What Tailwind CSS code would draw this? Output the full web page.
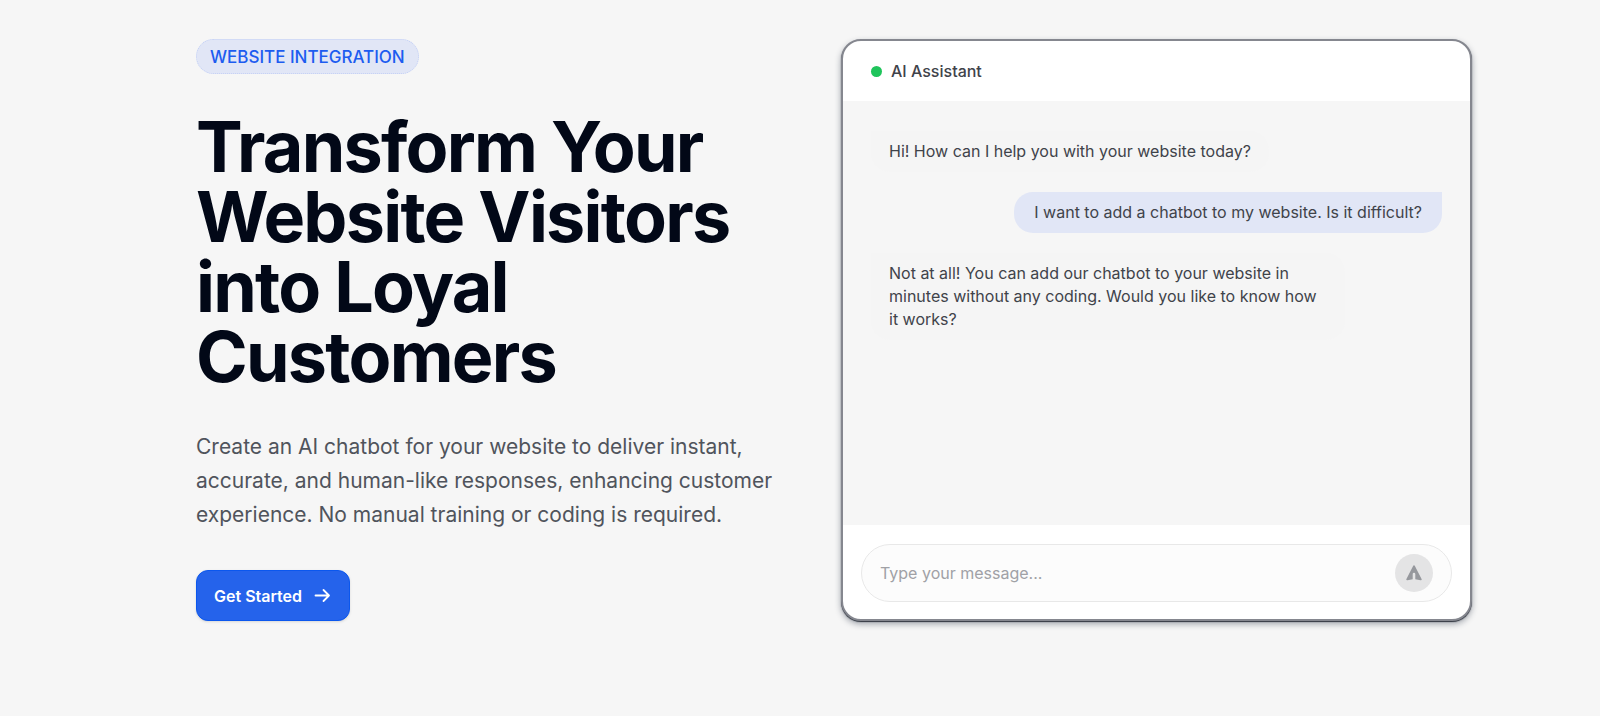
<!DOCTYPE html>
<html lang="en">
<head>
    <meta charset="UTF-8">
    <meta name="viewport" content="width=device-width, initial-scale=1.0">
    <title>Website Integration</title>
    <script src="https://cdn.jsdelivr.net/npm/@tailwindcss/browser@4"></script>
</head>
<body class="bg-[#f6f6f6] font-['Inter',sans-serif] text-[#3f434a]">
    <main class="mx-auto grid max-w-[1344px] grid-cols-2 gap-[14px] pt-[39px] pb-24 pl-[68px]">
        <!-- Hero -->
        <section class="flex flex-col items-start">
            <span class="rounded-full border border-dotted border-[#c3d0f5] bg-[#e1e6f6] px-[13px] pt-[6px] pb-1 text-[17px] leading-[23px] font-medium text-[#1d5cf0]">WEBSITE INTEGRATION</span>
            <h1 class="mt-[38px] max-w-[600px] text-[70px] leading-[70px] font-bold tracking-tight text-[#020817]">Transform Your Website Visitors into Loyal Customers</h1>
            <p class="mt-[38px] max-w-[600px] text-[21px] leading-[34px] text-[#50545c]">Create an AI chatbot for your website to deliver instant, accurate, and human-like responses, enhancing customer experience. No manual training or coding is required.</p>
            <a href="#start" class="mt-auto flex h-[51px] items-center gap-[10px] rounded-xl border border-[#0b57ee] bg-[#2563eb] px-[17px] text-[16px] font-semibold text-white shadow-sm hover:bg-blue-700">
                Get Started
                <svg class="size-5" viewBox="0 0 20 20" fill="none" stroke="currentColor" stroke-width="1.8" stroke-linecap="round" stroke-linejoin="round" aria-hidden="true">
                    <path d="M3.500 9.500h13.500M11.500 4l5.500 5.500-5.500 5.500"/>
                </svg>
            </a>
        </section>

        <!-- Chat preview -->
        <section class="flex h-[582px] flex-col overflow-hidden rounded-[20px] border-2 border-[#85878f] bg-white shadow-[0_1px_1px_#30353f,0_3px_6px_rgba(30,40,60,0.4)]">
            <header class="flex h-[60px] shrink-0 items-center gap-[9px] px-7">
                <span class="size-[11px] rounded-full bg-[#1fc45b]"></span>
                <h2 class="text-[16px] font-medium">AI Assistant</h2>
            </header>
            <div class="flex flex-1 flex-col gap-5 bg-[#f6f6f6] px-7 py-[30px] text-[16px] leading-[23px]">
                <p class="max-w-[83%] self-start rounded-[19px] rounded-tl-none bg-[#f5f5f5] px-[18px] py-[9px]">Hi! How can I help you with your website today?</p>
                <p class="max-w-[83%] self-end rounded-[19px] rounded-tr-none bg-[#e1e6f6] px-[20px] py-[9px]">I want to add a chatbot to my website. Is it difficult?</p>
                <p class="max-w-[83%] self-start rounded-[19px] rounded-tl-none bg-[#f5f5f5] px-[18px] py-[9px]">Not at all! You can add our chatbot to your website in minutes without any coding. Would you like to know how it works?</p>
            </div>
            <form class="shrink-0 px-[18px] pt-[19px] pb-[17px]">
                <div class="flex h-[58px] items-center rounded-full border border-[#e8e8e8] bg-[#fcfcfc] px-[18px]">
                    <input type="text" aria-label="Message" placeholder="Type your message..." class="min-w-0 flex-1 bg-transparent text-[16px] outline-none placeholder:text-[#a0a1a6]">
                    <button type="button" aria-label="Send" class="flex size-[38px] items-center justify-center rounded-full bg-[#e4e4e5] text-[#96989d]">
                        <svg class="size-4" viewBox="0 0 16 16" fill="currentColor" aria-hidden="true">
                            <path d="M8 .3q.6 0 .9.600L15.700 14.200q.2 1.300-1.200 1.100L9.300 14.300V9q0-1.200-1.300-1.200T6.700 9v5.300l-5.200 1q-1.400.2-1.200-1.100L7.100.9Q7.400.3 8 .3Z"/>
                        </svg>
                    </button>
                </div>
            </form>
        </section>
    </main>
</body>
</html>
